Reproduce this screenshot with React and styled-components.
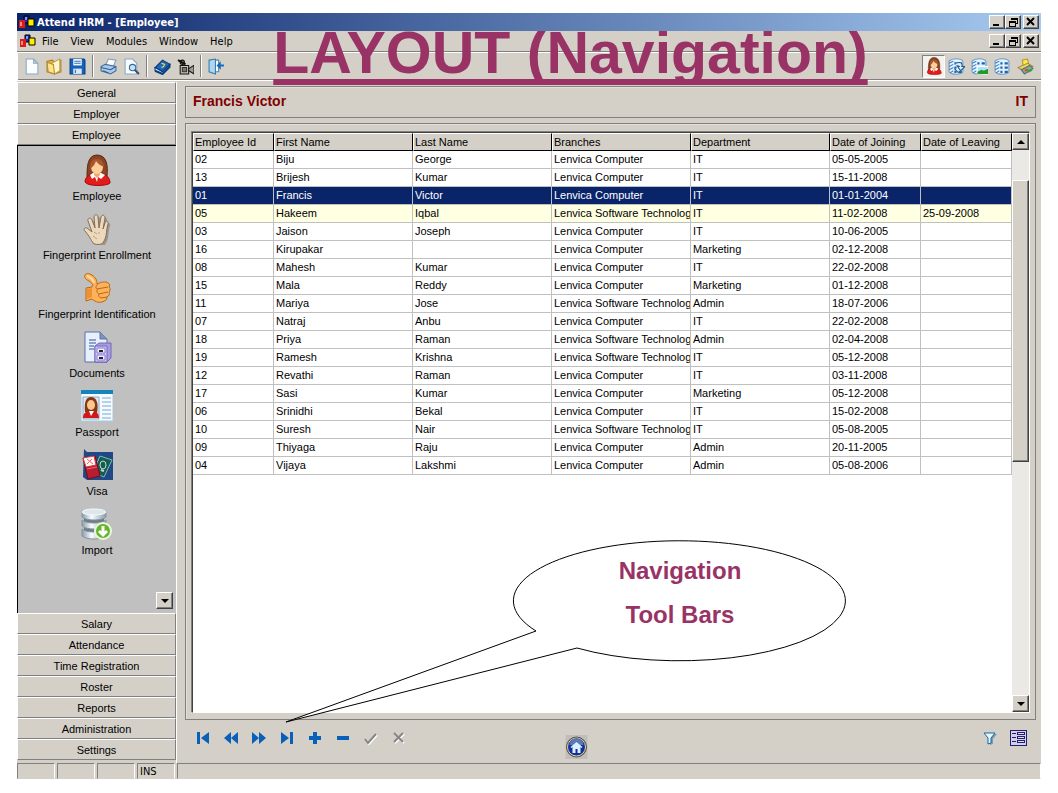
import React from "react";
import styled, { createGlobalStyle, css } from "styled-components";

const employees = [
  ["02", "Biju", "George", "Lenvica Computer", "IT", "05-05-2005", ""],
  ["13", "Brijesh", "Kumar", "Lenvica Computer", "IT", "15-11-2008", ""],
  ["01", "Francis", "Victor", "Lenvica Computer", "IT", "01-01-2004", ""],
  ["05", "Hakeem", "Iqbal", "Lenvica Software Technolog", "IT", "11-02-2008", "25-09-2008"],
  ["03", "Jaison", "Joseph", "Lenvica Computer", "IT", "10-06-2005", ""],
  ["16", "Kirupakar", "", "Lenvica Computer", "Marketing", "02-12-2008", ""],
  ["08", "Mahesh", "Kumar", "Lenvica Computer", "IT", "22-02-2008", ""],
  ["15", "Mala", "Reddy", "Lenvica Computer", "Marketing", "01-12-2008", ""],
  ["11", "Mariya", "Jose", "Lenvica Software Technolog", "Admin", "18-07-2006", ""],
  ["07", "Natraj", "Anbu", "Lenvica Computer", "IT", "22-02-2008", ""],
  ["18", "Priya", "Raman", "Lenvica Software Technolog", "Admin", "02-04-2008", ""],
  ["19", "Ramesh", "Krishna", "Lenvica Software Technolog", "IT", "05-12-2008", ""],
  ["12", "Revathi", "Raman", "Lenvica Computer", "IT", "03-11-2008", ""],
  ["17", "Sasi", "Kumar", "Lenvica Computer", "Marketing", "05-12-2008", ""],
  ["06", "Srinidhi", "Bekal", "Lenvica Computer", "IT", "15-02-2008", ""],
  ["10", "Suresh", "Nair", "Lenvica Software Technolog", "IT", "05-08-2005", ""],
  ["09", "Thiyaga", "Raju", "Lenvica Computer", "Admin", "20-11-2005", ""],
  ["04", "Vijaya", "Lakshmi", "Lenvica Computer", "Admin", "05-08-2006", ""],
];

const columns = [
  "Employee Id",
  "First Name",
  "Last Name",
  "Branches",
  "Department",
  "Date of Joining",
  "Date of Leaving",
];

const Woman = ({ size }) => (
  <svg width={size} height={size} viewBox="0 0 32 32" aria-hidden="true">
    <path d="M6 24C6 14 6 1 16 1s11 11 10 21l-2 4H8z" fill="#8a4424" stroke="#5a2814" />
    <path d="M4 28c0-5 4-7 8-8l4 3 5-3c5 1 8 4 8 9-2 3-22 4-25-1z" fill="#e01c1c" stroke="#a80808" />
    <path d="M9 21l3-2h8l4 2-4 4-3-2-1 5-2-5-3 2z" fill="#fff" />
    <path d="M13 18h6v3l-3 3-3-3z" fill="#f0a868" />
    <ellipse cx="16" cy="13" rx="6" ry="7" fill="#ffcf9a" />
    <path d="M9 15c0-7 2-10 7-10 4 0 7 3 7 8-3-1-6-3-8-6-1 3-3 6-6 8z" fill="#a85830" />
  </svg>
);

const Hand = () => (
  <svg width="32" height="32" viewBox="0 0 32 32" aria-hidden="true">
    <path
      d="M12 30c-2-3-3-6-8-12-2-2 0-4 2-3l5 4L7 8c-1-3 3-4 4-1l3 8-1-11c0-3 4-3 4 0l1 11 2-11c1-3 4-2 4 1l-2 11 2-6c1-3 4-2 3 1-2 6-1 11-3 15l-2 4c-3 2-7 2-10 0z"
      transform="translate(2 2)"
      fill="#75695a"
      opacity=".5"
    />
    <path
      d="M12 30c-2-3-3-6-8-12-2-2 0-4 2-3l5 4L7 8c-1-3 3-4 4-1l3 8-1-11c0-3 4-3 4 0l1 11 2-11c1-3 4-2 4 1l-2 11 2-6c1-3 4-2 3 1-2 6-1 11-3 15l-2 4c-3 2-7 2-10 0z"
      fill="#ecd8bc"
      stroke="#84705a"
    />
    <path d="M13 19l3 2M18 19v2M12 23l4 3" stroke="#b8a284" fill="none" />
  </svg>
);

const Thumb = () => (
  <svg width="32" height="32" viewBox="0 0 32 32" aria-hidden="true">
    <path
      d="M5 16l6-1c2-2 0-4-3-6C4 7 3 5 4 3s4-2 7 0c4 3 5 5 5 9 4-2 9-3 11-1 2 1 2 3 1 4 2 2 1 4 0 5 1 2 0 4-2 5 0 3-2 4-5 5-4 1-8-1-10-3l-6 2z"
      fill="#ffb25c"
      stroke="#b86814"
    />
    <path d="M6 17l5-1v9l-5 2z" fill="#f09030" />
    <path d="M17 12c-2 2-3 4-1 5l11-2M17 17c-2 2-1 4 1 5l9-2M18 22c-1 2 0 3 2 4l6-1" fill="none" stroke="#b86814" />
    <path d="M6 4c3 1 6 3 7 7" fill="none" stroke="#ffdda8" strokeWidth="2" />
  </svg>
);

const Documents = () => (
  <svg width="32" height="32" viewBox="0 0 32 32" aria-hidden="true">
    <path d="M4 1h15l7 7v23H4z" fill="#e8f0fc" stroke="#5870a8" />
    <path d="M19 1v7h7" fill="#7894c4" stroke="#5870a8" />
    <path d="M8 9h7M8 12h7M8 15h5M8 18h5" stroke="#8aa2cc" strokeWidth="2" />
    <path d="M14 15l4-3h12v15l-4 4H14z" fill="#a69ce0" stroke="#7468b8" />
    <path d="M14 15h12v16H14z" fill="#d0caf8" stroke="#7468b8" />
    <path d="M16 17h8v5h-8zM16 24h8v5h-8z" fill="#f0eeff" stroke="#8a7cd0" />
    <path d="M18 20h4M18 27h4" stroke="#222" strokeWidth="2" />
  </svg>
);

const Passport = () => (
  <svg width="32" height="32" viewBox="0 0 32 32" aria-hidden="true">
    <path d="M0 1h32v30H0z" fill="#f4faff" stroke="#a8c8e0" />
    <path d="M0 0h32v4H0z" fill="#1684bc" />
    <path d="M2 7h16v22H2z" fill="#ddeaf4" stroke="#90a8b8" />
    <path d="M4 22C3 12 5 7 10 7s8 5 6 16z" fill="#833818" />
    <ellipse cx="10" cy="15" rx="4" ry="5" fill="#ffc68c" />
    <path d="M2 28c0-5 3-6 6-7l2 3 3-3c3 1 5 3 5 7z" fill="#d41818" />
    <path d="M8 21l2 5 3-5z" fill="#fff" />
    <path d="M21 8h9M21 12h9M21 16h9M21 20h9M21 24h9M21 28h9" stroke="#b4d2e8" strokeWidth="2" />
  </svg>
);

const Visa = () => (
  <svg width="32" height="32" viewBox="0 0 32 32" aria-hidden="true">
    <path d="M3 0l3 3h26v28H6l-4-3z" fill="#204884" />
    <path d="M19 7l12 4-8 17-11-5z" fill="#125c54" stroke="#88b8b0" />
    <ellipse cx="22" cy="16" rx="3" ry="4" fill="none" stroke="#c8dcc8" />
    <path d="M20 21l3 1" stroke="#c8dcc8" strokeWidth="2" />
    <path d="M2 9l12-2 5 20-12 3z" fill="#b81c30" stroke="#700c1c" />
    <path d="M2 9l11-2 2 9-10 2z" fill="#fff3f0" stroke="#d83848" />
    <path d="M6 10l6 5M11 10l-5 5M6 20l10-2" stroke="#e86870" />
  </svg>
);

const Import = () => (
  <svg width="32" height="32" viewBox="0 0 32 32" aria-hidden="true">
    <defs>
      <linearGradient id="disc">
        <stop offset="0" stopColor="#8c9ca8" />
        <stop offset=".4" stopColor="#f8fcff" />
        <stop offset="1" stopColor="#8c9ca8" />
      </linearGradient>
    </defs>
    <path d="M3 8h20v20H3z" fill="#6c7c88" />
    <path d="M1 21v7c4 4 20 4 24 0v-7c-4 4-20 4-24 0zM1 12v6c4 4 20 4 24 0v-6c-4 4-20 4-24 0zM1 3v6c4 4 20 4 24 0V3z" fill="url(#disc)" stroke="#8595a0" />
    <ellipse cx="13" cy="4" rx="12" ry="3" fill="#dce8ee" stroke="#f4f9fc" />
    <circle cx="22" cy="23" r="8" fill="#65b52c" stroke="#e8f8dc" strokeWidth="2" />
    <path d="M22 18v8M18 23l4 4 4-4" fill="none" stroke="#fff" strokeWidth="3" />
  </svg>
);

const Logo = () => (
  <svg width="16" height="14" viewBox="0 0 16 14" aria-hidden="true">
    <path d="M5 1h5v7H5z" fill="#1828c0" stroke="#000" />
    <path d="M0 5h6v8H0z" fill="#e01818" />
    <path d="M9 4h6v7H9z" fill="#ffed00" stroke="#000" />
    <path d="M7 2v3M2 7v4" stroke="#fff" />
  </svg>
);

const tools = {
  New: <path d="M3 1h7l4 4v10H3zM10 1v4h4" fill="#fbfdff" stroke="#8aa8cc" />,
  Open: (
    <>
      <path d="M1 3l5-1 2 2 6-2v11l-6 2-7-2z" fill="#e4b948" stroke="#a98124" />
      <path d="M5 5l8-4v11l-5 3z" fill="#fff8cc" stroke="#c0a050" />
      <path d="M1 4l6 2 1 9-6-2z" fill="#ffe48c" stroke="#b68c30" />
    </>
  ),
  Save: (
    <>
      <path d="M1 1h13l1 1v13H1z" fill="#1662b8" stroke="#083c88" />
      <path d="M4 1h8v6H4z" fill="#f4f8ff" />
      <path d="M4 10h8v5H4z" fill="#d8e8f8" />
      <path d="M5 3h6M5 5h6M6 11v3" stroke="#2870b8" />
    </>
  ),
  Print: (
    <>
      <path d="M5 7l3-6 7 1-3 7z" fill="#fff" stroke="#829ab8" />
      <path d="M1 8l4-2 10 2v4l-5 3-9-3z" fill="#a8cbea" stroke="#426c9c" />
      <path d="M1 9l9 2 5-3M3 12l5 2" fill="none" stroke="#315c90" />
    </>
  ),
  Preview: (
    <>
      <path d="M2 1h7l4 4v10H2z" fill="#f8fcff" stroke="#8aa8cc" />
      <circle cx="9" cy="9" r="3" fill="#bfe4ff" stroke="#466684" />
      <path d="M11 11l4 4" stroke="#345474" strokeWidth="2" />
    </>
  ),
  Help: (
    <>
      <path d="M1 9l7-7 7 4-7 7z" fill="#1868bc" stroke="#073574" />
      <path d="M1 9v3l7 3 7-7V6l-7 7z" fill="#fff" stroke="#073574" />
      <path d="M1 12l7 3 7-7" fill="none" stroke="#083f84" strokeWidth="2" />
      <path d="M7 5l3 1-1 2-2 1" fill="none" stroke="#ffd840" />
    </>
  ),
  Camera: (
    <>
      <path d="M3 7h8v8H3z" fill="#c8c8b8" stroke="#111" />
      <circle cx="5" cy="4" r="2" fill="#999" stroke="#111" />
      <path d="M1 2l7 4" stroke="#111" strokeWidth="2" />
      <path d="M11 10l5-3v8l-5-3z" fill="#999" stroke="#111" />
      <path d="M5 9h4v4H5z" fill="#777" stroke="#333" />
    </>
  ),
  Exit: (
    <>
      <path d="M5 2h5v11H5z" fill="#fff" stroke="#4c88bc" />
      <path d="M1 2l6-1v14l-6-2z" fill="#acd7ef" stroke="#377bad" />
      <path d="M15 6h-3V3L8 7l4 4V8h3z" fill="#126bc0" />
    </>
  ),
};

const TableGlyph = ({ kind }) => (
  <svg width="17" height="17" viewBox="0 0 16 16" aria-hidden="true">
    {kind === "print" ? (
      <>
        <path d="M5 2l5-1 1 5-5 2z" fill="#ffe850" stroke="#b89c18" />
        <path d="M1 9l9-4 5 3-8 5z" fill="#f0d860" stroke="#a49038" />
        <path d="M4 11l8-4 3 3-8 5z" fill="#89a8a0" stroke="#567070" />
        <path d="M7 11l3-1 1 1-3 2z" fill="#e84420" />
        <path d="M10 13l4-2" stroke="#28a838" strokeWidth="2" />
      </>
    ) : (
      <>
        <path d="M1 3c3-3 11-3 13 0v10c-2 3-10 3-13 0z" fill="#e4f2ff" stroke="#6c9cc8" />
        <path d="M6 4h2v2H6zM10 4h3v2h-3zM6 8h2v2H6zM10 8h3v2h-3zM6 12h2v2H6zM10 12h3v2h-3z" fill="#1c64ac" />
        <path d="M1 5l4-2M1 8l4-2M1 11l4-2M2 14l3-2" stroke="#4080bc" />
        {kind === "refresh" && (
          <path d="M7 5c5-2 7 0 6 3h3l-4 4-3-4h2l-3-1M6 10l4 4" fill="#d8eeff" stroke="#245888" />
        )}
        {kind === "image" && (
          <>
            <path d="M6 8h10v7H6z" fill="#a8e4ff" stroke="#fff" />
            <path d="M6 13l4-2 2 1 4-2v5H6z" fill="#249828" />
          </>
        )}
      </>
    )}
  </svg>
);

const navShapes = {
  First: <path d="M2 2h3v12H2zM14 2v12L6 8z" />,
  Previous: <path d="M8 2v12L1 8zM15 2v12L8 8z" />,
  Next: <path d="M1 2v12l7-6zM8 2v12l7-6z" />,
  Last: <path d="M2 2v12l8-6zM11 2h3v12h-3z" />,
  Add: <path d="M6 2h4v4h4v4h-4v4H6v-4H2V6h4z" />,
  Remove: <path d="M2 6h12v4H2z" />,
  Apply: (
    <>
      <path d="M3 10l3 4 8-9" fill="none" stroke="#fff" strokeWidth="2" />
      <path d="M2 9l3 4 8-9" fill="none" stroke="#858585" strokeWidth="2" />
    </>
  ),
  Cancel: (
    <>
      <path d="M4 4l9 9M13 4l-9 9" fill="none" stroke="#fff" strokeWidth="2" />
      <path d="M3 3l9 9M12 3l-9 9" fill="none" stroke="#858585" strokeWidth="2" />
    </>
  ),
};

const modules = [
  ["Employee", <Woman size={32} />],
  ["Fingerprint Enrollment", <Hand />],
  ["Fingerprint Identification", <Thumb />],
  ["Documents", <Documents />],
  ["Passport", <Passport />],
  ["Visa", <Visa />],
  ["Import", <Import />],
];

const WindowControls = () => (
  <ControlGroup>
    <CaptionButton aria-label="Minimize">
      <svg width="12" height="10"><path d="M2 8h6" stroke="#000" strokeWidth="2" /></svg>
    </CaptionButton>
    <CaptionButton aria-label="Restore">
      <svg width="12" height="10" shapeRendering="crispEdges">
        <path d="M4 1h6v5H8M4 1v2M2 4h6v5H2z" fill="none" stroke="#000" />
        <path d="M4 2h6M2 5h6" stroke="#000" />
      </svg>
    </CaptionButton>
    <CaptionButton aria-label="Close" $gap>
      <svg width="12" height="10"><path d="M2 1l7 7M9 1L2 8" stroke="#000" strokeWidth="2" /></svg>
    </CaptionButton>
  </ControlGroup>
);

export default function App() {
  return (
    <>
      <GlobalStyle />
      <Page>
        <Window>
          <TitleBar>
            <Logo />
            <TitleText>Attend HRM - [Employee]</TitleText>
            <WindowControls />
          </TitleBar>
          <SlideTitle>LAYOUT (Navigation)</SlideTitle>
          <MenuBar>
            <Logo />
            {["File", "View", "Modules", "Window", "Help"].map((name) => (
              <MenuButton key={name}>{name}</MenuButton>
            ))}
            <WindowControls />
          </MenuBar>
          <ToolBar>
            {Object.entries(tools).map(([name, icon]) => (
              <React.Fragment key={name}>
                {["Print", "Help", "Exit"].includes(name) && <Separator />}
                <ToolButton aria-label={name}>
                  <svg width="17" height="17" viewBox="0 0 16 16">{icon}</svg>
                </ToolButton>
              </React.Fragment>
            ))}
            <ViewTools>
              <ToolButton aria-label="Employee view" $active><Woman size={18} /></ToolButton>
              {["refresh", "image", "grid", "print"].map((kind) => (
                <ToolButton key={kind} aria-label={kind}><TableGlyph kind={kind} /></ToolButton>
              ))}
            </ViewTools>
          </ToolBar>
          <Body>
            <Sidebar>
              {["General", "Employer", "Employee"].map((name) => (
                <GroupButton key={name}>{name}</GroupButton>
              ))}
              <ModuleList>
                {modules.map(([name, icon]) => (
                  <ModuleButton key={name}>{icon}<span>{name}</span></ModuleButton>
                ))}
                <MoreButton aria-label="Scroll modules down"><Arrow /></MoreButton>
              </ModuleList>
              {["Salary", "Attendance", "Time Registration", "Roster", "Reports", "Administration", "Settings"].map((name) => (
                <GroupButton key={name}>{name}</GroupButton>
              ))}
            </Sidebar>
            <Main>
              <RecordHeader><span>Francis Victor</span><span>IT</span></RecordHeader>
              <GridPanel>
                <GridFrame>
                  <TableArea>
                    <Table>
                      <colgroup>
                        <Col $share={81} /><Col $share={139} /><Col $share={139} /><Col $share={139} />
                        <Col $share={139} /><Col $share={91} /><Col $share={91} />
                      </colgroup>
                      <thead>
                        <tr>{columns.map((name) => <Th key={name}>{name}</Th>)}</tr>
                      </thead>
                      <tbody>
                        {employees.map((row) => (
                          <Row key={row[0]} $selected={row[0] === "01"} $left={row[6] !== ""}>
                            {row.map((value, i) => <Td key={columns[i]}>{value}</Td>)}
                          </Row>
                        ))}
                      </tbody>
                    </Table>
                  </TableArea>
                  <ScrollBar>
                    <ScrollButton aria-label="Scroll up"><Arrow $up /></ScrollButton>
                    <Track><ScrollThumb /></Track>
                    <ScrollButton aria-label="Scroll down"><Arrow /></ScrollButton>
                  </ScrollBar>
                </GridFrame>
              </GridPanel>
              <Navigator>
                <NavGroup>
                  {Object.entries(navShapes).map(([name, shape]) => (
                    <NavButton key={name} aria-label={name}>
                      <svg width="16" height="16" fill="#0860b8">{shape}</svg>
                    </NavButton>
                  ))}
                </NavGroup>
                <HomeLink href="#home" aria-label="Home">
                  <svg width="23" height="24" viewBox="0 0 22 24">
                    <path d="M0 0h22v24H0z" fill="#c0bdbc" />
                    <circle cx="11" cy="12" r="10" fill="#12309c" stroke="#5d5740" />
                    <circle cx="11" cy="12" r="9" fill="none" stroke="#e9dc94" />
                    <path d="M4 10a7 7 0 0 1 14 0z" fill="#5c78b4" />
                    <path d="M5 12l6-5 6 5-1 1-1-1v6h-3v-4h-2v4H7v-6l-1 1z" fill="#d8f0ff" />
                  </svg>
                </HomeLink>
                <NavGroup $end>
                  <NavButton aria-label="Filter">
                    <svg width="16" height="16">
                      <path d="M5 4h10l-4 5v5l-3 1V9z" fill="#7c9db4" />
                      <path d="M2 3h11L9 8v5l-3 1V8z" fill="#e8f7ff" stroke="#19679c" />
                    </svg>
                  </NavButton>
                  <NavButton aria-label="Form view">
                    <svg width="17" height="16" shapeRendering="crispEdges">
                      <path d="M0 0h17v16H0z" fill="#201c80" />
                      <path d="M1 1h15v14H1z" fill="#d4d0dc" />
                      <path d="M2 3h4v1H2zM2 7h4v1H2zM2 11h4v1H2zM7 2h8v3H7zM7 6h8v3H7zM7 10h8v3H7z" fill="#201c80" />
                      <path d="M8 3h6v1H8zM8 7h6v1H8zM8 11h6v1H8z" fill="#e4e0ec" />
                    </svg>
                  </NavButton>
                </NavGroup>
              </Navigator>
            </Main>
          </Body>
          <StatusBar>
            <StatusCell /><StatusCell /><StatusCell /><StatusCell>INS</StatusCell><StatusCell $fill />
          </StatusBar>
        </Window>
        <Callout>
          <svg width="562" height="183" viewBox="0 0 562 183" aria-hidden="true">
            <path
              d="M250 91 A166 60 0 1 1 291 108 L0 182Z"
              fill="#fff"
              stroke="#000"
            />
          </svg>
          <CalloutText>Navigation<br />Tool Bars</CalloutText>
        </Callout>
      </Page>
    </>
  );
}

const GlobalStyle = createGlobalStyle`
  * {
    box-sizing: border-box;
  }

  body {
    margin: 0;
    background: #fff;
    font-family: "Liberation Sans", Arial, sans-serif;
    font-size: 11px;
    color: #000;
  }

  button {
    font: inherit;
    color: inherit;
    padding: 0;
    border: 0;
    background: none;
  }

  svg {
    display: block;
    flex: none;
  }
`;

const raised = css`
  background: #d4d0c8;
  border: 1px solid;
  border-color: #fff #404040 #404040 #fff;
  box-shadow: inset -1px -1px #808080;
`;

const Page = styled.div`
  position: relative;
  min-height: 100vh;
  padding: 13px 17px 14px;
  display: flex;
`;

const Window = styled.div`
  position: relative;
  flex: 1;
  min-width: 0;
  display: flex;
  flex-direction: column;
  background: #d4d0c8;
`;

const TitleBar = styled.header`
  position: relative;
  z-index: 2;
  height: 18px;
  display: flex;
  align-items: center;
  gap: 2px;
  padding: 0 2px;
  background: linear-gradient(90deg, #0a246a, #a6caf0);
`;

const TitleText = styled.strong`
  font-family: "DejaVu Sans Condensed", "DejaVu Sans", sans-serif;
  font-size: 11px;
  color: #fff;
`;

/* heading lies over the menu and tool bars, its top runs under the title bar */
const SlideTitle = styled.h1`
  position: absolute;
  z-index: 1;
  top: 6px;
  left: 0;
  right: 0;
  padding-left: 83px;
  margin: 0;
  text-align: center;
  font-size: 59px;
  line-height: 68px;
  white-space: nowrap;
  color: #993366;
  pointer-events: none;
  text-decoration: underline;
  text-decoration-thickness: 6px;
  text-decoration-skip-ink: none;
  text-underline-offset: 6px;
`;

const ControlGroup = styled.div`
  display: flex;
  margin-left: auto;
`;

const CaptionButton = styled.button`
  ${raised}
  width: 16px;
  height: 14px;
  margin-left: ${(p) => (p.$gap ? "2px" : "0")};
  display: flex;
  align-items: center;
  justify-content: center;
`;

const MenuBar = styled.nav`
  height: 20px;
  display: flex;
  align-items: center;
  padding: 0 2px 0 3px;
`;

const MenuButton = styled.button`
  padding: 0 6px;
  font-family: "DejaVu Sans Condensed", "DejaVu Sans", sans-serif;
  font-size: 11px;
`;

const ToolBar = styled.div`
  height: 30px;
  display: flex;
  align-items: center;
  padding: 0 4px 0 3px;
  border-top: 1px solid #808080;
  border-bottom: 1px solid #fff;
  box-shadow: inset 1px 1px #fff, inset 0 -1px #808080;
`;

const ToolButton = styled.button`
  width: 23px;
  height: 23px;
  display: flex;
  align-items: center;
  justify-content: center;
  ${(p) =>
    p.$active &&
    css`
      background: #f4f2ee;
      border: 1px solid;
      border-color: #808080 #fff #fff #808080;
    `}
`;

const Separator = styled.span`
  width: 2px;
  height: 22px;
  margin: 0 3px;
  border-left: 1px solid #808080;
  border-right: 1px solid #fff;
`;

const ViewTools = styled.div`
  display: flex;
  margin-left: auto;
`;

const Body = styled.div`
  flex: 1;
  display: flex;
  padding-top: 1px;
`;

const Sidebar = styled.aside`
  width: 160px;
  flex: none;
  display: flex;
  flex-direction: column;
  padding-bottom: 3px;
  border-right: 1px solid #fff;
`;

const GroupButton = styled.button`
  height: 21px;
  flex: none;
  border: 1px solid;
  border-color: #fff #808080 #808080 #fff;
`;

const ModuleList = styled.div`
  flex: 1;
  display: flex;
  flex-direction: column;
  padding-top: 8px;
  background: #c0c0c0;
  border-top: 1px solid #000;
  border-left: 1px solid #000;
`;

const ModuleButton = styled.button`
  height: 59px;
  display: flex;
  flex-direction: column;
  align-items: center;
  gap: 4px;
`;

const MoreButton = styled.button`
  ${raised}
  width: 17px;
  height: 17px;
  margin: auto 3px 4px auto;
  display: flex;
  align-items: center;
  justify-content: center;
`;

const Arrow = styled.span`
  border: 4px solid transparent;
  border-top-width: ${(p) => (p.$up ? "0" : "4px")};
  border-bottom-width: ${(p) => (p.$up ? "4px" : "0")};
  border-top-color: ${(p) => (p.$up ? "transparent" : "#000")};
  border-bottom-color: ${(p) => (p.$up ? "#000" : "transparent")};
`;

const Main = styled.main`
  flex: 1;
  min-width: 0;
  display: flex;
  flex-direction: column;
  margin-left: 1px;
  padding: 4px 5px 0 7px;
`;

const RecordHeader = styled.div`
  height: 32px;
  display: flex;
  justify-content: space-between;
  align-items: center;
  padding: 0 7px 2px;
  border: 1px solid #808080;
  box-shadow: inset 1px 1px #e4e0d8;
  font-size: 14px;
  font-weight: bold;
  color: #800000;
`;

const GridPanel = styled.section`
  flex: 1;
  display: flex;
  margin-top: 5px;
  padding: 8px 5px 6px 6px;
  border: 1px solid #808080;
  box-shadow: inset 1px 1px #e4e0d8;
`;

const GridFrame = styled.div`
  flex: 1;
  min-width: 0;
  display: flex;
  border: 1px solid;
  border-color: #404040 #fff #fff #404040;
  box-shadow: -1px -1px #808080;
  background: #fff;
`;

const TableArea = styled.div`
  flex: 1;
  min-width: 0;
`;

const Table = styled.table`
  width: 100%;
  table-layout: fixed;
  border-collapse: separate;
  border-spacing: 0;
`;

const Col = styled.col`
  width: ${(p) => (p.$share / 819) * 100}%;
`;

const Th = styled.th`
  height: 18px;
  padding: 0 1px;
  text-align: left;
  font-weight: normal;
  line-height: 16px;
  white-space: nowrap;
  background: #d4d0c8;
  border: 1px solid;
  border-color: #fff #000 #000 #fff;
`;

const Row = styled.tr`
  background: ${(p) => (p.$selected ? "#0a246a" : p.$left ? "#ffffe1" : "#fff")};
  color: ${(p) => (p.$selected ? "#fff" : "#000")};
`;

const Td = styled.td`
  height: 18px;
  padding: 0 0 0 2px;
  line-height: 17px;
  white-space: nowrap;
  overflow: hidden;
  border-right: 1px solid #c0c0c0;
  border-bottom: 1px solid #c0c0c0;
`;

const ScrollBar = styled.div`
  width: 17px;
  flex: none;
  display: flex;
  flex-direction: column;
  background: #ebe9e5;
`;

const ScrollButton = styled.button`
  ${raised}
  height: 17px;
  display: flex;
  align-items: center;
  justify-content: center;
`;

const Track = styled.div`
  flex: 1;
  padding-top: 30px;
`;

const ScrollThumb = styled.div`
  ${raised}
  height: 282px;
`;

const Navigator = styled.div`
  height: 43px;
  display: grid;
  grid-template-columns: 1fr auto 1fr;
  padding: 9px 9px 0 10px;
`;

const NavGroup = styled.div`
  display: flex;
  gap: 12px;
  justify-content: ${(p) => (p.$end ? "flex-end" : "flex-start")};
`;

const NavButton = styled.button`
  height: 18px;
`;

const HomeLink = styled.a`
  padding-top: 6px;
  margin-right: 70px;
`;

const StatusBar = styled.footer`
  height: 16px;
  display: flex;
  gap: 2px;
`;

const StatusCell = styled.div`
  width: ${(p) => (p.$fill ? "auto" : "38px")};
  flex: ${(p) => (p.$fill ? "1" : "none")};
  padding-left: 2px;
  border: 1px solid;
  border-color: #808080 #fff transparent #808080;
  font-family: "DejaVu Sans Condensed", "DejaVu Sans", sans-serif;
  line-height: 15px;
`;

const Callout = styled.div`
  position: absolute;
  z-index: 3;
  left: 286px;
  top: 540px;
  pointer-events: none;
`;

const CalloutText = styled.p`
  position: absolute;
  left: 228px;
  top: 9px;
  width: 332px;
  margin: 0;
  text-align: center;
  font-size: 24px;
  font-weight: bold;
  line-height: 44px;
  color: #993366;
`;
